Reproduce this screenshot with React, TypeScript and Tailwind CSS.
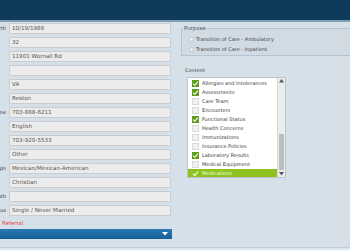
import React from 'react'

type Field = { label: string; value: string }

const fields: Field[] = [
  { label: 'Date of Birth', value: '10/19/1986' },
  { label: '', value: '32' },
  { label: '', value: '11901 Wornall Rd' },
  { label: '', value: '' },
  { label: '', value: 'VA' },
  { label: '', value: 'Reston' },
  { label: 'Home Phone', value: '703-888-6211' },
  { label: '', value: 'English' },
  { label: '', value: '703-920-5533' },
  { label: '', value: 'Other' },
  { label: 'Ethnic Origin', value: 'Mexican/Mexican-American' },
  { label: '', value: 'Christian' },
  { label: 'Date of Death', value: '' },
  { label: 'Marital Status', value: 'Single / Never Married' },
]

const content = [
  { name: 'Allergies and Intolerances', on: true },
  { name: 'Assessments', on: true },
  { name: 'Care Team', on: false },
  { name: 'Encounters', on: false },
  { name: 'Functional Status', on: true },
  { name: 'Health Concerns', on: false },
  { name: 'Immunizations', on: false },
  { name: 'Insurance Policies', on: false },
  { name: 'Laboratory Results', on: true },
  { name: 'Medical Equipment', on: false },
  { name: 'Medications', on: true, selected: true },
]

function Check({ on, selected }: { on: boolean; selected?: boolean }) {
  if (selected) {
    return (
      <svg width="7" height="7" viewBox="0 0 7 7" className="shrink-0">
        <path d="M1 3.8 L2.8 5.5 L6 1.5" fill="none" stroke="#f4ffe0" strokeWidth="1.2" />
      </svg>
    )
  }
  if (!on) return <span className="block w-[7px] h-[7px] shrink-0 bg-[#f1f1f1] border border-[#dadada]" />
  return (
    <span className="flex w-[7px] h-[7px] shrink-0 bg-[#5e9e1c] items-center justify-center">
      <svg width="7" height="7" viewBox="0 0 7 7">
        <path d="M1.2 3.6 L2.9 5.3 L5.9 1.6" fill="none" stroke="#ffffff" strokeWidth="1.1" />
      </svg>
    </span>
  )
}

export default function App() {
  return (
    <div className="w-[350px] h-[250px] overflow-hidden bg-[#d6e0e9] text-[#3a3a3a] flex flex-col" style={{ fontFamily: '"DejaVu Sans", Verdana, sans-serif' }}>
      <div className="h-[20px] shrink-0 bg-[#0e3a5c]" />
      <div className="h-[2px] shrink-0 bg-[#7f9db7]" />

      <div className="flex flex-1 min-h-0">
        {/* left form column */}
        <div className="w-[172px] shrink-0 flex flex-col pt-[1px]">
          <div className="flex flex-col gap-[3px]">
            {fields.map((f, i) => (
              <div key={i} className="flex items-center h-[11px]">
                <div className="w-[9px] shrink-0 pr-[3px]">
                  <div className="overflow-hidden flex justify-end">
                    <span className="text-[5px] leading-none whitespace-nowrap text-[#333]">{f.label}</span>
                  </div>
                </div>
                <div className="w-[162px] h-[11px] bg-[#ececec] border border-[#c9cdd1] rounded-[1px] flex items-center px-[2px]">
                  <span className="text-[5.6px] leading-none whitespace-nowrap text-[#555]">{f.value}</span>
                </div>
              </div>
            ))}
          </div>
          <div className="mt-[5px] pl-[2px] text-[5.4px] leading-none text-[#e0433f]">Referral</div>
          <div className="mt-[3px] h-[10px] w-[172px] bg-gradient-to-b from-[#2a7ab3] to-[#155f97] flex items-center justify-end pr-[4px]">
            <svg width="6" height="4" viewBox="0 0 6 4">
              <path d="M0 0 L6 0 L3 3.5 Z" fill="#ffffff" />
            </svg>
          </div>
        </div>

        {/* right column */}
        <div className="flex-1 pl-[9px] pt-[4px] flex flex-col">
          <fieldset className="border border-[#b7c3ce] mr-[-10px] pl-[7px] pb-[3px] bg-[#d1dbe4]">
            <legend className="px-[1px] ml-[-6px] text-[5.4px] leading-none text-[#555]">Purpose</legend>
            <div className="flex flex-col gap-[5px] pt-[6px]">
              {['Transition of Care - Ambulatory', 'Transition of Care - Inpatient'].map(t => (
                <div key={t} className="flex items-center gap-[2px]">
                  <span className="block w-[5px] h-[5px] rounded-full bg-[#f4f4f4] border border-[#c3c3c3]" />
                  <span className="text-[5px] leading-none whitespace-nowrap text-[#444]">{t}</span>
                </div>
              ))}
            </div>
          </fieldset>

          <div className="mt-[12px] pl-[4px] text-[5px] leading-none text-[#444]">Content</div>

          <div className="mt-[4px] ml-[6px] w-[99px] h-[101px] border border-[#bcc5cc] bg-white flex">
            <div className="flex-1 flex flex-col pt-[1px] overflow-hidden">
              {content.map(c => (
                <div
                  key={c.name}
                  className={
                    'h-[9px] shrink-0 flex items-center gap-[3px] pl-[4px] ' +
                    (c.selected ? 'bg-[#8dc21f] text-[#f7ffe8]' : 'text-[#3c3c3c]')
                  }
                >
                  <Check on={c.on} selected={c.selected} />
                  <span className="text-[5px] leading-none whitespace-nowrap">{c.name}</span>
                </div>
              ))}
            </div>
            <div className="w-[8px] shrink-0 bg-[#ececec] border-l border-[#d8d8d8] flex flex-col items-center justify-between py-[1px]">
              <svg width="5" height="4" viewBox="0 0 5 4"><path d="M0 3.5 L5 3.5 L2.5 0 Z" fill="#555" /></svg>
              <div className="flex-1 w-full flex flex-col justify-end px-[1px] py-[2px]">
                <div className="h-[36px] bg-[#bdbdbd] rounded-[1px]" />
              </div>
              <svg width="5" height="4" viewBox="0 0 5 4"><path d="M0 0 L5 0 L2.5 3.5 Z" fill="#555" /></svg>
            </div>
          </div>
        </div>
      </div>
      <div className="h-[3px] shrink-0 border-t border-[#c3ced8] bg-[#dfe7ee]" />
    </div>
  )
}
